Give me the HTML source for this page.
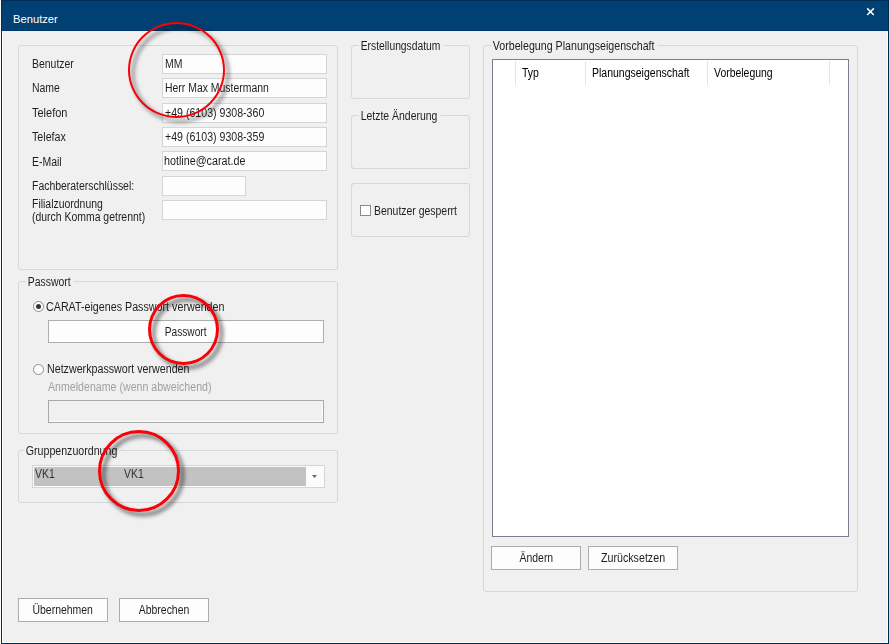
<!DOCTYPE html>
<html lang="de">
<head>
<meta charset="utf-8">
<title>Benutzer</title>
<style>
html,body{margin:0;padding:0;}
body{width:889px;height:644px;overflow:hidden;background:#fcfcfc;font-family:"Liberation Sans",sans-serif;font-size:11px;color:#1e1e1e;position:relative;}
#win{position:absolute;left:1px;top:0;width:888px;height:644px;box-sizing:border-box;background:#f0f0f0;border:1px solid #002d58;box-shadow:inset 0 0 0 1px #fcfcfc;}
#title{position:absolute;left:1px;top:0;width:888px;height:31px;background:#004072;border:1px solid #002d58;border-bottom-color:#003664;box-sizing:border-box;}
#title span{position:absolute;left:11px;top:11px;font-size:11.2px;color:#fff;line-height:14px;}
.abs{position:absolute;}
.gb{position:absolute;box-sizing:border-box;border:1px solid #d7d7d7;border-radius:3px;}
.gb>.cap{position:absolute;top:-7.3px;left:6.6px;padding:0 4px 0 2px;background:#f0f0f0;line-height:14px;white-space:nowrap;font-size:12px;transform:scaleX(var(--s,.87));transform-origin:0 50%;}
.lbl{position:absolute;white-space:nowrap;line-height:13px;font-size:12px;transform:scaleX(var(--s,.87));transform-origin:0 50%;}
.tb{position:absolute;box-sizing:border-box;background:#fdfdfd;border:1px solid #d5d5d5;height:20px;line-height:18px;padding-left:2px;white-space:nowrap;}
.tb>span,.btn>span{display:inline-block;font-size:12px;transform:scaleX(var(--s,.87));}
.tb>span{transform-origin:0 50%;}
.btn{position:absolute;box-sizing:border-box;background:#fdfdfd;border:1px solid #adadad;text-align:center;white-space:nowrap;}
.radio{position:absolute;box-sizing:border-box;width:11px;height:11px;border:1px solid #8c8c8c;border-radius:50%;background:#fff;}
.radio.on::after{content:"";position:absolute;left:2px;top:2px;width:5px;height:5px;border-radius:50%;background:#333;}
.ring{position:absolute;box-sizing:border-box;border:2.8px solid #fa0008;border-radius:50%;filter:drop-shadow(4.8px 4.4px 2.1px rgba(0,0,0,.64));}
</style>
</head>
<body>
<div id="win"></div>
<div id="title"><span>Benutzer</span>
<svg class="abs" style="left:864px;top:5.8px" width="9" height="9" viewBox="0 0 9 9"><path d="M1.2 1.4 L7.8 8 M7.8 1.4 L1.2 8" stroke="#fff" stroke-width="1.5" fill="none"/></svg>
</div>

<!-- group 1 -->
<div class="gb" style="left:18px;top:45px;width:320px;height:225px"></div>
<div class="lbl" style="left:32px;top:58px">Benutzer</div>
<div class="lbl" style="left:32px;top:82px">Name</div>
<div class="lbl" style="left:32px;top:107px;--s:.915">Telefon</div>
<div class="lbl" style="left:32px;top:131px;--s:.89">Telefax</div>
<div class="lbl" style="left:32px;top:156px">E-Mail</div>
<div class="lbl" style="left:32px;top:180px">Fachberaterschlüssel:</div>
<div class="lbl" style="left:32px;top:197.5px;line-height:13px">Filialzuordnung<br>(durch Komma getrennt)</div>
<div class="tb" style="left:162px;top:54px;width:165px"><span>MM</span></div>
<div class="tb" style="left:162px;top:78px;width:165px"><span>Herr Max Mustermann</span></div>
<div class="tb" style="left:162px;top:103px;width:165px"><span style="--s:.883">+49 (6103) 9308-360</span></div>
<div class="tb" style="left:162px;top:127px;width:165px"><span style="--s:.883">+49 (6103) 9308-359</span></div>
<div class="tb" style="left:162px;top:151px;width:165px;padding-left:1px"><span style="--s:.895">hotline@carat.de</span></div>
<div class="tb" style="left:162px;top:176px;width:84px"></div>
<div class="tb" style="left:162px;top:200px;width:165px"></div>

<!-- Passwort -->
<div class="gb" style="left:18px;top:281px;width:320px;height:153px"><span class="cap">Passwort</span></div>
<div class="radio on" style="left:33px;top:301px"></div>
<div class="lbl" style="left:46.3px;top:300.5px;--s:.893">CARAT-eigenes Passwort verwenden</div>
<div class="btn" style="left:48px;top:320px;width:276px;height:23px;line-height:23px"><span style="--s:.845">Passwort</span></div>
<div class="radio" style="left:33px;top:364px"></div>
<div class="lbl" style="left:47.3px;top:363px;--s:.89">Netzwerkpasswort verwenden</div>
<div class="lbl" style="left:48px;top:381px;color:#a0a0a0;--s:.885">Anmeldename (wenn abweichend)</div>
<div class="abs" style="left:48px;top:400px;width:276px;height:23px;box-sizing:border-box;border:1px solid #a8a8a8;background:#f0f0f0;box-shadow:inset -1px -1px 0 #fbfbfb"></div>

<!-- Gruppenzuordnung -->
<div class="gb" style="left:18px;top:450px;width:320px;height:53px"><span class="cap" style="--s:.885;left:5.4px">Gruppenzuordnung</span></div>
<div class="abs" style="left:32px;top:465px;width:293px;height:23px;box-sizing:border-box;border:1px solid #d5d5d5;background:#fcfcfc">
  <div class="abs" style="left:1px;top:1px;width:272px;height:19px;background:#c2c2c2"></div>
  <div class="lbl" style="left:2px;top:2px;color:#333">VK1</div>
  <div class="lbl" style="left:91px;top:2px;color:#333">VK1</div>
  <svg class="abs" style="left:279px;top:9px" width="5" height="3" viewBox="0 0 5 3"><path d="M0 0 L5 0 L2.5 3 Z" fill="#666"/></svg>
</div>

<!-- middle column -->
<div class="gb" style="left:351px;top:45px;width:119px;height:54px"><span class="cap" style="--s:.86">Erstellungsdatum</span></div>
<div class="gb" style="left:351px;top:115px;width:119px;height:54px"><span class="cap">Letzte Änderung</span></div>
<div class="gb" style="left:351px;top:183px;width:119px;height:54px"></div>
<div class="abs" style="left:360px;top:205px;width:11px;height:11px;box-sizing:border-box;border:1px solid #8a8a8a;background:#fff"></div>
<div class="lbl" style="left:374px;top:205px">Benutzer gesperrt</div>

<!-- right column -->
<div class="gb" style="left:483px;top:45px;width:375px;height:547px"><span class="cap" style="--s:.888">Vorbelegung Planungseigenschaft</span></div>
<div class="abs" style="left:492px;top:59px;width:357px;height:478px;box-sizing:border-box;border:1px solid #7a7f8d;background:#fff">
  <div class="abs" style="left:22px;top:1px;width:1px;height:24px;background:#e5e5e5"></div>
  <div class="abs" style="left:92px;top:1px;width:1px;height:24px;background:#e5e5e5"></div>
  <div class="abs" style="left:214px;top:1px;width:1px;height:24px;background:#e5e5e5"></div>
  <div class="abs" style="left:336px;top:1px;width:1px;height:24px;background:#e5e5e5"></div>
  <div class="lbl" style="left:29px;top:7px;color:#000">Typ</div>
  <div class="lbl" style="left:99px;top:7px;color:#000;--s:.875">Planungseigenschaft</div>
  <div class="lbl" style="left:221px;top:7px;color:#000">Vorbelegung</div>
</div>
<div class="btn" style="left:491px;top:546px;width:90px;height:24px;line-height:23px"><span>Ändern</span></div>
<div class="btn" style="left:588px;top:546px;width:90px;height:24px;line-height:23px"><span style="--s:.89">Zurücksetzen</span></div>

<!-- bottom buttons -->
<div class="btn" style="left:18px;top:598px;width:90px;height:24px;line-height:23px"><span>Übernehmen</span></div>
<div class="btn" style="left:119px;top:598px;width:90px;height:24px;line-height:23px"><span>Abbrechen</span></div>

<!-- red rings -->
<div class="ring" style="left:128px;top:22px;width:97px;height:96px"></div>
<div class="ring" style="left:148px;top:293.8px;width:70.6px;height:71.4px;border-width:3.2px"></div>
<div class="ring" style="left:98px;top:430px;width:82px;height:82px;border-width:3.2px"></div>
</body>
</html>
